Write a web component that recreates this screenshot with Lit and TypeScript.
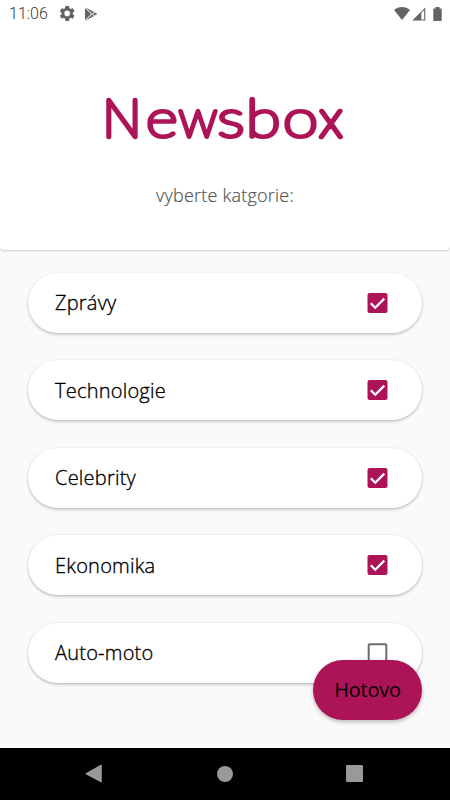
import { LitElement, html, svg, css } from "lit";
import { customElement, property, state } from "lit/decorators.js";

@customElement("status-bar")
class StatusBar extends LitElement {
  static styles = css`
    :host { display: flex; align-items: center; height: 27px; padding: 0 8px 0 9px; box-sizing: border-box; }
    .time { font: 300 16px/27px Roboto, sans-serif; color: #383838; width: 50px; letter-spacing: 0; }
    svg { display: block; fill: #636363; }
    .gear { margin-right: 9px; }
    .right { margin-left: auto; display: flex; align-items: center; }
    .wifi { margin-right: 2px; }
    .cell { margin-right: 7px; }
  `;
  render() {
    return html`
      <span class="time">11:06</span>
      <svg class="gear" width="16" height="16" viewBox="1.500 2.500 20.500 20.500"><path d="M19.14 12.94c.04-.3.06-.61.06-.94s-.02-.64-.07-.94l2.03-1.58a.5.5 0 0 0 .12-.61l-1.92-3.32a.5.5 0 0 0-.59-.22l-2.39.96a7 7 0 0 0-1.62-.94l-.36-2.54a.48.48 0 0 0-.48-.41h-3.84a.48.48 0 0 0-.47.41l-.36 2.54c-.59.24-1.13.57-1.62.94l-2.39-.96a.5.5 0 0 0-.59.22L2.74 8.87a.48.48 0 0 0 .12.61l2.03 1.58a6 6 0 0 0 0 1.88l-2.03 1.58a.5.5 0 0 0-.12.61l1.92 3.32c.12.22.37.29.59.22l2.39-.96c.5.38 1.03.7 1.62.94l.36 2.54c.05.24.24.41.48.41h3.84c.24 0 .44-.17.47-.41l.36-2.54c.59-.24 1.13-.56 1.62-.94l2.39.96c.22.08.47 0 .59-.22l1.92-3.32a.5.5 0 0 0-.12-.61zM12 15.6a3.6 3.6 0 1 1 0-7.2 3.6 3.6 0 0 1 0 7.2z"/></svg>
      <svg width="14" height="14" viewBox="0 0 14 14"><path d="M1 1 7.200 7 1 13z"/><path d="M1.500.300 10 5 8.100 6.700zM1.500 13.700 10 9 8.100 7.300zM10.500 5.400 13.500 7 10.500 8.600 8.900 7z"/></svg>
      <div class="right">
        <svg class="wifi" width="16" height="13" viewBox="0 0 16 13"><path d="M0 3.100C4.500-.900 11.500-.900 16 3.100L8 12.900z"/></svg>
        <svg class="cell" width="14" height="14" viewBox="0 0 14 14"><path fill-rule="evenodd" d="M13.300.500V13.500H.300zM9.300 5.800V12.400H12.200V2.900z"/></svg>
        <svg width="9" height="14" viewBox="0 0 9 14"><path d="M2.500 0h4v1.500H8q.700 0 .700.700v11q0 .800-.700.800H1q-.700 0-.700-.800v-11q0-.700.700-.700h1.500z"/></svg>
      </div>`;
  }
}

@customElement("news-logo")
class NewsLogo extends LitElement {
  static styles = css`
    :host, svg { display: block; }
    svg { overflow: visible; }
    text {
      font: 100 52px Lato, sans-serif;
      fill: #ad1457; stroke: #ad1457; stroke-width: 4.1px;
      stroke-linejoin: round; stroke-linecap: round;
    }
    .bold { stroke-width: 4.600px; }
  `;
  render() {
    const stretch = "spacingAndGlyphs";
    return html`<svg width="250" height="60" viewBox="100 88 250 60">
      ${svg`<text y="136.500"><tspan class="bold" x="102.500">N</tspan><tspan x="146" textLength="31.500" lengthAdjust=${stretch}>e</tspan><tspan x="178.500">w</tspan><tspan x="217.500" textLength="27" lengthAdjust=${stretch}>s</tspan><tspan x="246" textLength="34.500" lengthAdjust=${stretch}>b</tspan><tspan x="283" textLength="35" lengthAdjust=${stretch}>o</tspan><tspan class="bold" x="319.300">x</tspan></text>`}
    </svg>`;
  }
}

@customElement("category-row")
class CategoryRow extends LitElement {
  @property() label = "";
  @property({ type: Boolean }) checked = false;
  static styles = css`
    :host {
      display: flex; align-items: center; justify-content: space-between;
      height: 60px; box-sizing: border-box; padding: 0 34px 0 27.500px;
      border-radius: 30px; background: #fff;
      box-shadow: 0 1.500px 3px rgba(0,0,0,.24), 0 0 2px rgba(0,0,0,.06);
      font: 300 20px/28px "Open Sans", sans-serif; color: #000; letter-spacing: .22px;
    }
    svg { display: block; }
    .label { padding-top: 1px; -webkit-text-stroke: .35px #000; }
  `;
  render() {
    return html`<span class="label">${this.label}</span>
      <svg width="21" height="20" viewBox="0 0 21 20">
        ${this.checked
          ? svg`<rect x=".5" width="20" height="20" rx="2" fill="#ad1457"/><path d="M3.800 10.300 8.200 14.700 17.300 5.600" fill="none" stroke="#fff" stroke-width="2.200"/>`
          : svg`<rect x="1.700" y="1.200" width="17.600" height="17.600" rx=".8" fill="none" stroke="#6b6b6b" stroke-width="2"/>`}
      </svg>`;
  }
}

@customElement("nav-bar")
class NavBar extends LitElement {
  static styles = css`
    :host { display: flex; align-items: center; justify-content: space-between; height: 52.500px; box-sizing: border-box; background: #000; padding: 0 87px 0 85px; }
    svg { display: block; fill: #999; }
  `;
  render() {
    return html`
      <svg width="18" height="20" viewBox="0 0 18 20"><path d="M.8 9.300 15.800.800q1-.400 1 .500v16.400q0 .900-1 .500L.8 10.300q-.8-.500 0-1z"/></svg>
      <svg width="16" height="16" viewBox="0 0 16 16"><circle cx="8" cy="8" r="8"/></svg>
      <svg width="17" height="17" viewBox="0 0 17 17"><rect width="17" height="17" rx="1"/></svg>`;
  }
}

@customElement("app-root")
class AppRoot extends LitElement {
  @state() private categories = [
    { label: "Zprávy", checked: true },
    { label: "Technologie", checked: true },
    { label: "Celebrity", checked: true },
    { label: "Ekonomika", checked: true },
    { label: "Auto-moto", checked: false },
  ];
  static styles = css`
    :host { display: flex; flex-direction: column; position: relative; width: 450px; height: 800px; overflow: hidden; background: #fafafa; }
    .header { height: 250px; background: #fff; border-radius: 0 0 4px 4px; box-shadow: 0 1px 2px rgba(0,0,0,.18); display: flex; flex-direction: column; align-items: center; }
    status-bar { align-self: stretch; }
    news-logo { margin-top: 61px; }
    .hint { margin-top: 34px; font: 300 18px/26px "Open Sans", sans-serif; color: #555; letter-spacing: .22px; -webkit-text-stroke: .2px #555; }
    .list { flex: 1; display: flex; flex-direction: column; gap: 27.500px; padding: 22.500px 28px 0 27.500px; }
    .done {
      position: absolute; left: 312.600px; top: 660px; width: 109.800px; height: 60px; border: 0; padding: 0;
      border-radius: 30px; background: #ad1457; color: #000; font: 400 20px/28px "Open Sans", sans-serif; letter-spacing: -.25px;
      box-shadow: 0 2px 4px rgba(0,0,0,.26);
    }
  `;
  render() {
    return html`
      <div class="header">
        <status-bar></status-bar>
        <news-logo></news-logo>
        <div class="hint">vyberte katgorie:</div>
      </div>
      <div class="list">
        ${this.categories.map((c) => html`<category-row .label=${c.label} .checked=${c.checked}></category-row>`)}
      </div>
      <button class="done">Hotovo</button>
      <nav-bar></nav-bar>`;
  }
}
